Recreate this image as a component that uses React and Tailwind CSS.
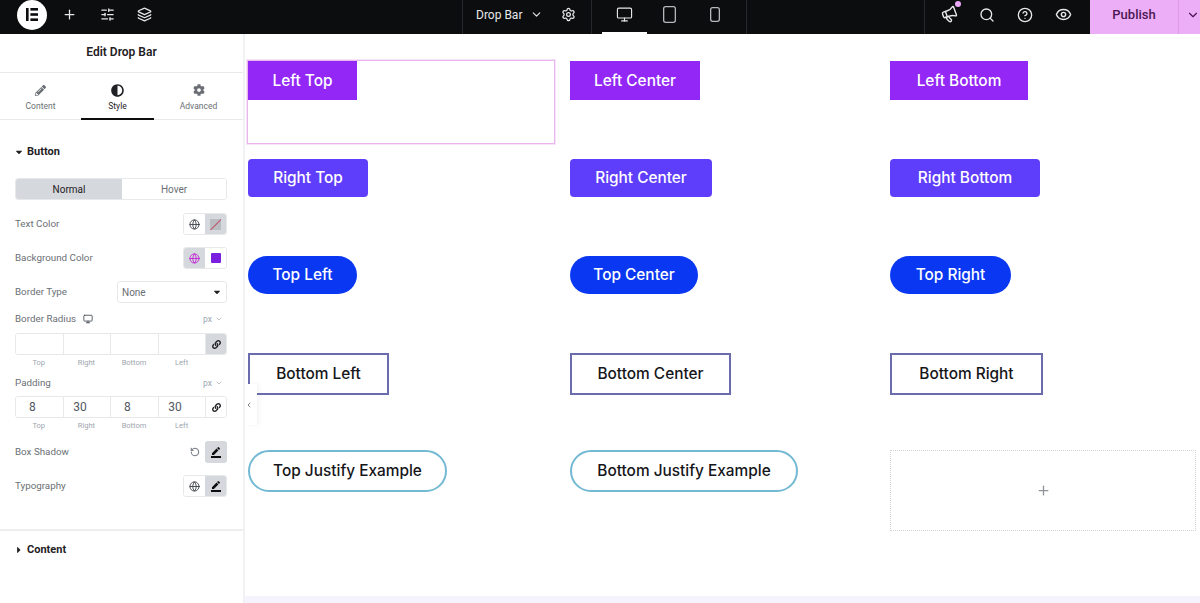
import { Plus, SlidersHorizontal, Layers, ChevronDown, ChevronLeft, Settings, Monitor, Megaphone, Search, CircleHelp, Eye, Globe, RotateCcw } from 'lucide-react';
import { FaPencilAlt, FaAdjust, FaCog, FaLink, FaCaretDown, FaCaretRight } from 'react-icons/fa';
import { MdBorderColor } from 'react-icons/md';

const purple = 'bg-[#9227f6] text-white';
const violet = 'bg-[#5f3efb] text-white rounded-[4px]';
const blue = 'bg-[#0a38f2] text-white rounded-full';
const outlined = 'bg-white text-[#16161a] border-2 border-[#6a6cae]';
const pill = 'bg-white text-[#16161a] border-2 border-[#74b9d3] rounded-full';

const rows = [
  { h: 'h-[99px]', btnH: 'h-[39px]', cls: purple, items: [['Left Top', 'w-[109px]'], ['Left Center', 'w-[130px]'], ['Left Bottom', 'w-[138px]']] },
  { h: 'h-[97px]', btnH: 'h-[38px]', cls: violet, items: [['Right Top', 'w-[120px]'], ['Right Center', 'w-[142px]'], ['Right Bottom', 'w-[150px]']] },
  { h: 'h-[97px]', btnH: 'h-[38px]', cls: blue, items: [['Top Left', 'w-[109px]'], ['Top Center', 'w-[128px]'], ['Top Right', 'w-[121px]']] },
  { h: 'h-[97px]', btnH: 'h-[42px]', cls: outlined, items: [['Bottom Left', 'w-[141px]'], ['Bottom Center', 'w-[161px]'], ['Bottom Right', 'w-[153px]']] },
];

function DropButton({ label, width, height, cls }) {
  return (
    <button className={`flex items-center justify-center text-[15.4px] font-[450] font-['Inter',sans-serif] ${width} ${height} ${cls}`}>
      {label}
    </button>
  );
}

function Logo() {
  return (
    <svg width="30" height="30" viewBox="0 0 30 30">
      <circle cx="15" cy="15" r="15" fill="#fff" />
      <rect x="9" y="8" width="2.6" height="13" fill="#0c0d0e" />
      <rect x="13.4" y="8" width="7.6" height="2.6" fill="#0c0d0e" />
      <rect x="13.4" y="13.2" width="7.6" height="2.6" fill="#0c0d0e" />
      <rect x="13.4" y="18.4" width="7.6" height="2.6" fill="#0c0d0e" />
    </svg>
  );
}

function DeviceFrame({ w, h }) {
  return (
    <svg width={w} height={h} viewBox={`0 0 ${w} ${h}`} fill="none" stroke="currentColor" strokeWidth="1.3">
      <rect x="0.65" y="0.65" width={w - 1.3} height={h - 1.3} rx="2" />
    </svg>
  );
}

function TopBar() {
  return (
    <div className="flex h-[34px] bg-[#0c0d0e] text-[#e6e8ea]">
      <div className="flex w-[463px] items-start border-r border-[#26282b] pl-[17px]">
        <Logo />
        <Plus size={15} className="ml-[15px] mt-[7px]" />
        <SlidersHorizontal size={15} className="ml-[23px] mt-[7px]" />
        <Layers size={15} className="ml-[22px] mt-[7px]" />
      </div>
      <div className="flex w-[129px] items-center border-r border-[#26282b] pb-[5px] pl-[13px] text-[12px] font-['Roboto',sans-serif]">
        <span>Drop Bar</span>
        <ChevronDown size={13} className="ml-[8px]" />
        <Settings size={15} className="ml-[18px]" />
      </div>
      <div className="flex w-[155px] border-r border-[#26282b] pl-[10px]">
        <div className="flex h-[34px] w-[45px] items-center justify-center border-b-2 border-white pb-[4px]">
          <Monitor size={17} strokeWidth={1.6} />
        </div>
        <div className="flex w-[45px] items-center justify-center pb-[5px] text-[#b4b7bb]"><DeviceFrame w={13} h={17} /></div>
        <div className="flex w-[45px] items-center justify-center pb-[5px] text-[#b4b7bb]"><DeviceFrame w={10} h={15} /></div>
      </div>
      <div className="w-[178px] border-r border-[#26282b]" />
      <div className="flex w-[165px] items-center pb-[5px] pl-[16px]">
        <div className="relative">
          <Megaphone size={17} className="-rotate-[20deg]" />
          <span className="absolute -right-[3px] -top-[5px] h-[6px] w-[6px] rounded-full bg-[#e9a9f6]" />
        </div>
        <Search size={16} className="ml-[21px]" />
        <CircleHelp size={16} className="ml-[22px]" />
        <Eye size={17} className="ml-[22px]" />
      </div>
      <div className="flex w-[88px] items-center justify-center bg-[#edaef8] pb-[5px] text-[13px] font-medium text-[#4a1752] font-['Roboto',sans-serif]">
        Publish
      </div>
      <div className="flex flex-1 items-center justify-end border-l border-[#dc9ce8] bg-[#edaef8] pb-[5px] text-[#4a1752]">
        <ChevronDown size={14} />
      </div>
    </div>
  );
}

function Tab({ icon, label, active, className }) {
  return (
    <div className={`flex w-[73px] flex-col items-center pt-[10px] ${active ? 'h-[47px] border-b-2 border-[#0c0d0e] text-[#1f2124]' : 'text-[#6b6f75]'} ${className || ''}`}>
      <div className="flex h-[14px] items-center text-[13px]">{icon}</div>
      <span className="mt-[3px] text-[8.5px] leading-[12px]">{label}</span>
    </div>
  );
}

function ControlRow({ label, children, extra }) {
  return (
    <div className="flex h-[22px] items-center justify-between">
      <span className="text-[9.8px] text-[#6b6f75]">{label}{extra}</span>
      {children}
    </div>
  );
}

function IconPair({ left, right, leftOn, rightOn }) {
  return (
    <div className="flex h-[22px] w-[44px] overflow-hidden rounded-[3px] border border-[#e6e8ea]">
      <div className={`flex w-[22px] items-center justify-center ${leftOn ? 'bg-[#d5d8dc]' : 'bg-white'}`}>{left}</div>
      <div className={`flex w-[22px] items-center justify-center ${rightOn ? 'bg-[#d5d8dc]' : 'bg-white'}`}>{right}</div>
    </div>
  );
}

function Dimensions({ values, linked }) {
  const labels = ['Top', 'Right', 'Bottom', 'Left'];
  return (
    <div>
      <div className="flex h-[22px] overflow-hidden rounded-[3px] border border-[#e6e8ea]">
        {labels.map((l, i) => (
          <div key={l} className="flex w-[47.6px] items-center justify-center border-r border-[#e6e8ea] bg-white pr-[14px] text-[12px] text-[#515962]">
            {values[i]}
          </div>
        ))}
        <div className={`flex flex-1 items-center justify-center text-[9px] text-[#1f2124] ${linked ? 'bg-[#d5d8dc]' : 'bg-white'}`}>
          <FaLink />
        </div>
      </div>
      <div className="mt-[1px] flex">
        {labels.map(l => (
          <span key={l} className="w-[47.6px] text-center text-[7.5px] leading-[14px] text-[#9da5ae]">{l}</span>
        ))}
      </div>
    </div>
  );
}

function Sidebar() {
  return (
    <aside className="w-[245px] shrink-0 border-r-2 border-[#f1f2f3] bg-white font-['Roboto',sans-serif]">
      <div className="flex h-[39px] items-center justify-center border-b border-[#e6e8ea] pb-[2px] text-[12px] font-semibold text-[#1f2124]">
        Edit Drop Bar
      </div>
      <div className="flex h-[47px] gap-[4px] border-b border-[#e6e8ea] pl-[4px]">
        <Tab icon={<FaPencilAlt className="text-[11px]" />} label="Content" />
        <Tab icon={<FaAdjust />} label="Style" active />
        <Tab icon={<FaCog className="text-[12px]" />} label="Advanced" className="ml-[4px]" />
      </div>
      <div className="px-[15px]">
        <div className="mt-[25px] flex h-[14px] items-center text-[11px] font-bold text-[#1f2124]">
          <FaCaretDown className="mr-[4px] w-[8px] text-[10px]" /> Button
        </div>
        <div className="mt-[19px] flex h-[22px] w-[212px] overflow-hidden rounded-[3px] border border-[#e6e8ea] text-[10px]">
          <div className="flex w-[106px] items-center justify-center bg-[#d5d8dc] text-[#1f2124]">Normal</div>
          <div className="flex flex-1 items-center justify-center bg-white text-[#6b6f75]">Hover</div>
        </div>
        <div className="mt-[13px] w-[212px]">
          <ControlRow label="Text Color">
            <IconPair
              left={<Globe size={11} className="text-[#3f444b]" />}
              right={<span className="relative block h-[11px] w-[11px] overflow-hidden bg-[#b9bcc1]"><span className="absolute left-[-3px] top-[5px] block h-[1px] w-[18px] -rotate-45 bg-[#c2566d]" /></span>}
              rightOn
            />
          </ControlRow>
          <div className="mt-[12px]">
            <ControlRow label="Background Color">
              <IconPair
                left={<Globe size={11} className="text-[#c026d3]" />}
                right={<span className="block h-[10px] w-[10px] rounded-[1px] bg-[#7a1fe0]" />}
                leftOn
              />
            </ControlRow>
          </div>
          <div className="mt-[12px]">
            <ControlRow label="Border Type">
              <div className="flex h-[22px] w-[110px] items-center justify-between rounded-[3px] border border-[#e6e8ea] px-[4px] text-[10px] text-[#6b6f75]">
                None <FaCaretDown className="text-[10px] text-[#1f2124]" />
              </div>
            </ControlRow>
          </div>
          <div className="mt-[9px] flex h-[14px] items-center justify-between text-[9.8px] text-[#6b6f75]">
            <span className="flex items-center">Border Radius <Monitor size={10} className="ml-[7px] text-[#3f444b]" /></span>
            <span className="mr-[4px] flex items-center text-[8.5px] text-[#9da5ae]">px <ChevronDown size={8} className="ml-[3px]" /></span>
          </div>
          <div className="mt-[7px]"><Dimensions values={['', '', '', '']} linked /></div>
          <div className="mt-[6px] flex h-[14px] items-center justify-between text-[9.8px] text-[#6b6f75]">
            <span>Padding</span>
            <span className="mr-[4px] flex items-center text-[8.5px] text-[#9da5ae]">px <ChevronDown size={8} className="ml-[3px]" /></span>
          </div>
          <div className="mt-[6px]"><Dimensions values={['8', '30', '8', '30']} /></div>
          <div className="mt-[8px]">
            <ControlRow label="Box Shadow">
              <div className="flex items-center">
                <RotateCcw size={10} className="mr-[5px] text-[#515962]" />
                <div className="flex h-[22px] w-[22px] items-center justify-center rounded-[3px] bg-[#d5d8dc] text-[12px] text-[#0c0d0e]"><MdBorderColor /></div>
              </div>
            </ControlRow>
          </div>
          <div className="mt-[12px]">
            <ControlRow label="Typography">
              <IconPair
                left={<Globe size={11} className="text-[#3f444b]" />}
                right={<MdBorderColor className="text-[12px] text-[#0c0d0e]" />}
                rightOn
              />
            </ControlRow>
          </div>
        </div>
      </div>
      <div className="mt-[32px] flex h-[40px] items-center border-t-2 border-[#eceef0] pl-[15px] text-[11px] font-bold text-[#1f2124]">
        <FaCaretRight className="mr-[4px] w-[8px] text-[10px]" /> Content
      </div>
    </aside>
  );
}

function Canvas() {
  return (
    <main className="relative flex min-w-0 flex-1 flex-col bg-white">
      <button className="absolute left-0 top-[350px] flex h-[41px] w-[12px] items-center justify-center bg-white pr-[4px] shadow-[2px_0_4px_rgba(0,0,0,0.05)]">
        <ChevronLeft size={10} className="text-[#3f444b]" />
      </button>
      <div className="flex-1 pl-[3px] pt-[26px]">
        {rows.map((row, r) => (
          <div key={r} className={`grid grid-cols-[322px_320px_1fr] ${row.h}`}>
            {row.items.map(([label, w], c) => (
              <div key={label} className={r === 0 && c === 0 ? '-ml-[1px] h-[84px] w-[308px] border border-[#eab5ef] shadow-[0_0_0_1px_#f6e4f8]' : r === 0 ? 'pt-[1px]' : ''}>
                <DropButton label={label} width={w} height={row.btnH} cls={row.cls} />
              </div>
            ))}
          </div>
        ))}
        <div className="grid h-[81px] grid-cols-[322px_320px_1fr]">
          <div><DropButton label="Top Justify Example" width="w-[199px]" height="h-[42px]" cls={pill} /></div>
          <div><DropButton label="Bottom Justify Example" width="w-[228px]" height="h-[42px]" cls={pill} /></div>
          <div className="mr-[4px] flex items-center justify-center border border-dotted border-[#d0d3d6]">
            <Plus size={15} className="text-[#8d9399]" />
          </div>
        </div>
      </div>
      <div className="h-[7px] bg-[#f5f3fe]" />
    </main>
  );
}

export default function App() {
  return (
    <div className="flex h-[603px] w-[1200px] flex-col overflow-hidden bg-white">
      <TopBar />
      <div className="flex min-h-0 flex-1">
        <Sidebar />
        <Canvas />
      </div>
    </div>
  );
}
